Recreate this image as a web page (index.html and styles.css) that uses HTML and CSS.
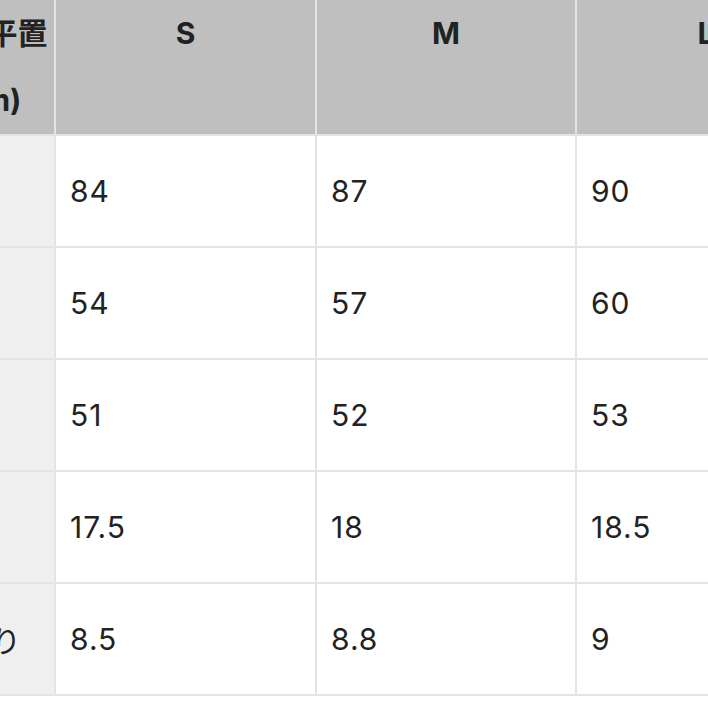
FILE: index.html
```html
<!DOCTYPE html>
<html lang="ja">
<head>
<meta charset="utf-8">
<link rel="stylesheet" href="styles.css">
</head>
<body>
<div class="viewport">
  <div class="size-table">
    <div class="cell head label">実寸平置<br>(cm)</div>
    <div class="cell head">S</div>
    <div class="cell head">M</div>
    <div class="cell head">L</div>

    <div class="cell label">着丈</div>
    <div class="cell">84</div>
    <div class="cell">87</div>
    <div class="cell">90</div>

    <div class="cell label">身幅</div>
    <div class="cell">54</div>
    <div class="cell">57</div>
    <div class="cell">60</div>

    <div class="cell label">肩幅</div>
    <div class="cell">51</div>
    <div class="cell">52</div>
    <div class="cell">53</div>

    <div class="cell label">袖丈</div>
    <div class="cell">17.5</div>
    <div class="cell">18</div>
    <div class="cell">18.5</div>

    <div class="cell label">袖ぐり</div>
    <div class="cell">8.5</div>
    <div class="cell">8.8</div>
    <div class="cell">9</div>
  </div>
</div>
</body>
</html>
```

FILE: styles.css
```css
html, body {
  margin: 0;
  padding: 0;
  background: #ffffff;
}

.viewport {
  width: 708px;
  height: 708px;
  overflow: hidden;
}

.size-table {
  display: grid;
  grid-template-columns: 137px 259px 258px 258px;
  grid-template-rows: 134px repeat(5, 110px);
  gap: 2px;
  background: #e4e4e4;
  border-bottom: 2px solid #e4e4e4;
  margin-left: -83px;
  width: max-content;
  font-family: "Inter", "Noto Sans CJK JP", sans-serif;
  color: #222222;
}

.cell {
  background: #ffffff;
  display: flex;
  align-items: center;
  padding-left: 14px;
  font-size: 30px;
  letter-spacing: 1px;
}

.cell.label {
  background: #efefef;
  font-size: 30px;
  letter-spacing: 0;
}

.cell.head {
  background: #bfbfbf;
  justify-content: center;
  align-items: flex-start;
  text-align: center;
  padding-left: 0;
  font-weight: 700;
  font-size: 30px;
  line-height: 67px;
  letter-spacing: 0;
}

.cell.head.label {
  background: #bfbfbf;
  padding-left: 4px;
}
```
